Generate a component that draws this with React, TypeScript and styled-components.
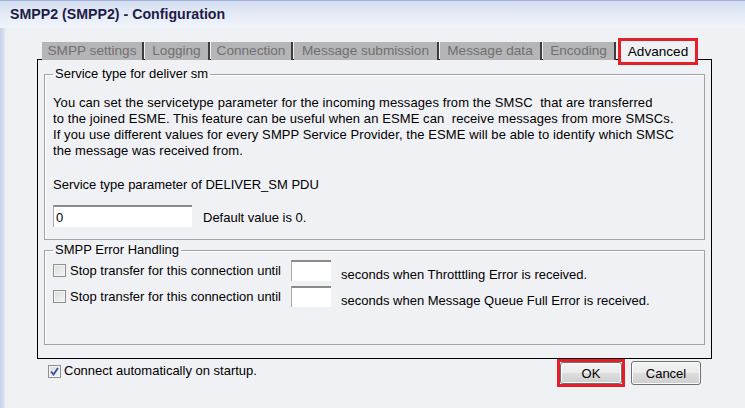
import * as React from "react";
import styled, { createGlobalStyle } from "styled-components";

const GlobalStyle = createGlobalStyle`
  html, body {
    margin: 0;
    padding: 0;
    background: #f0f1f5;
  }
  body {
    font-family: "Liberation Sans", Arial, sans-serif;
    font-size: 13px;
    color: #000;
  }
`;

const Window = styled.div`
  width: 745px;
  height: 408px;
  display: flex;
  flex-direction: column;
  background: linear-gradient(to right, #c3d1ea 0, #d9e2f2 4px, #e9eef8 5px);
  border-top: 1px solid #9fb2dc;
  box-sizing: border-box;
  overflow: hidden;
`;

const TitleBar = styled.div`
  height: 27px;
  display: flex;
  align-items: center;
  padding: 0 0 2px 10px;
  box-sizing: border-box;
  background: linear-gradient(to bottom, #d3ddf0 0, #e4eaf6 45%, #f1f4fa 100%);
  color: #1d1d48;
  font-weight: bold;
  font-size: 14.2px;
`;

const Body = styled.div`
  flex: 1;
  margin-left: 6px;
  background: #f0f1f5;
  display: flex;
  flex-direction: column;
  padding: 14px 0 0 31px;
`;

const Sheet = styled.div`
  width: 675px;
  display: flex;
  flex-direction: column;
`;

const TabStrip = styled.div`
  display: flex;
  align-items: flex-start;
  height: 18px;
  padding-left: 5px;
  margin-bottom: -1px;
  position: relative;
  z-index: 2;
  font-size: 13.6px;
`;

const Tab = styled.div<{ $width: number }>`
  width: ${(p) => p.$width}px;
  height: 18px;
  margin-right: 1px;
  padding-bottom: 1px;
  display: flex;
  align-items: center;
  justify-content: center;
  box-sizing: border-box;
  white-space: nowrap;
  background: #b5b5b7;
  color: #707072;
  border-right: 2px solid #3c3c3c;
`;

const ActiveTab = styled.div<{ $width: number }>`
  width: ${(p) => p.$width}px;
  height: 27px;
  margin-top: -4px;
  margin-left: 1px;
  padding-bottom: 1px;
  display: flex;
  align-items: center;
  justify-content: center;
  box-sizing: border-box;
  white-space: nowrap;
  background: #f0f1f5;
  color: #000;
  border: 3px solid #e3202a;
`;

const Panel = styled.div`
  border: 1px solid #000;
  padding: 6px 6px 13px 6px;
  display: flex;
  flex-direction: column;
  gap: 2px;
  position: relative;
  z-index: 1;
`;

const Group = styled.fieldset<{ $bottom: number }>`
  margin: 0;
  padding: 0 8px ${(p) => p.$bottom}px 8px;
  border: 1px solid #a2a2a6;
  box-shadow: inset 1px 1px 0 #ffffff;
  min-width: 0;
`;

const Legend = styled.legend`
  padding: 0 2px;
  line-height: 16px;
  height: 16px;
`;

const Paragraph = styled.div`
  margin-top: 13px;
  line-height: 16px;
  white-space: pre;
  letter-spacing: 0.09px;
`;

const Caption = styled.div`
  margin-top: 18px;
  line-height: 16px;
`;

const InputRow = styled.div`
  margin-top: 12px;
  display: flex;
  align-items: center;
  gap: 11px;
`;

const TextBox = styled.div<{ $width: number; $height: number }>`
  width: ${(p) => p.$width}px;
  height: ${(p) => p.$height}px;
  box-sizing: border-box;
  background: #fff;
  border-top: 2px solid #8a8a8a;
  border-left: 1px solid #a8a8a8;
  padding: 1px 3px 0 2px;
  display: flex;
  align-items: center;
  line-height: 16px;
`;

const HelpText = styled.span`
  padding-top: 3px;
`;

const ErrorRow = styled.div<{ $top: number }>`
  margin-top: ${(p) => p.$top}px;
  height: 21px;
  display: flex;
  align-items: center;
`;

const CheckLabel = styled.label`
  display: flex;
  align-items: center;
  gap: 4px;
  width: 238px;
  white-space: nowrap;
`;

const SecondsLabel = styled.span`
  margin-left: 10px;
  padding-top: 7px;
  white-space: nowrap;
`;

const Box = styled.span`
  width: 13px;
  height: 13px;
  box-sizing: border-box;
  border: 1px solid #8e8f8f;
  background: linear-gradient(135deg, #dcdcdc 0, #f4f4f4 100%);
  box-shadow: inset 0 0 0 1px #f4f4f4;
  display: inline-flex;
  align-items: center;
  justify-content: center;
  flex: none;
`;

const Footer = styled.div`
  display: flex;
  justify-content: space-between;
  align-items: flex-start;
  padding: 0 11px 0 11px;
`;

const AutoConnect = styled.label`
  display: flex;
  align-items: center;
  gap: 3px;
  margin-top: 5px;
  line-height: 14px;
`;

const Buttons = styled.div`
  display: flex;
  align-items: flex-start;
  gap: 6px;
`;

const Highlight = styled.div`
  border: 3px solid #e3202a;
  display: flex;
  margin-left: 1px;
`;

const Button = styled.button<{ $width: number }>`
  width: ${(p) => p.$width}px;
  height: 22px;
  margin: 0;
  padding: 0;
  font: inherit;
  color: #000;
  border: 1px solid #707070;
  border-radius: 3px;
  background: linear-gradient(to bottom, #f2f2f2 0, #ebebeb 50%, #dddddd 51%, #cfcfcf 100%);
  box-shadow: inset 0 0 0 1px #fbfbfb;
`;

const CancelButton = styled(Button)`
  height: 24px;
  margin-top: 2px;
`;

function CheckBox({ checked }: { checked?: boolean }) {
  return (
    <Box>
      {checked && (
        <svg width="9" height="9" viewBox="0 0 9 9">
          <path d="M1 4.5 L3.5 7.5 L8 1" fill="none" stroke="#3b4f9e" strokeWidth="1.8" />
        </svg>
      )}
    </Box>
  );
}

const tabs: [string, number][] = [
  ["SMPP settings", 102],
  ["Logging", 65],
  ["Connection", 82],
  ["Message submission", 145],
  ["Message data", 102],
  ["Encoding", 73],
];

const intro = [
  "You can set the servicetype parameter for the incoming messages from the SMSC  that are transferred",
  "to the joined ESME. This feature can be useful when an ESME can  receive messages from more SMSCs.",
  "If you use different values for every SMPP Service Provider, the ESME will be able to identify which SMSC",
  "the message was received from.",
];

function App() {
  return (
    <>
      <GlobalStyle />
      <Window>
        <TitleBar>SMPP2 (SMPP2) - Configuration</TitleBar>
        <Body>
          <Sheet>
            <TabStrip>
              {tabs.map(([t, w]) => (
                <Tab key={t} $width={w}>
                  {t}
                </Tab>
              ))}
              <ActiveTab $width={80}>Advanced</ActiveTab>
            </TabStrip>
            <Panel>
              <Group $bottom={12}>
                <Legend>Service type for deliver sm</Legend>
                <Paragraph>{intro.join("\n")}</Paragraph>
                <Caption>Service type parameter of DELIVER_SM PDU</Caption>
                <InputRow>
                  <TextBox $width={139} $height={22}>0</TextBox>
                  <HelpText>Default value is 0.</HelpText>
                </InputRow>
              </Group>
              <Group $bottom={37}>
                <Legend>SMPP Error Handling</Legend>
                <ErrorRow $top={2}>
                  <CheckLabel>
                    <CheckBox />
                    Stop transfer for this connection until
                  </CheckLabel>
                  <TextBox $width={40} $height={21} />
                  <SecondsLabel>seconds when Throtttling Error is received.</SecondsLabel>
                </ErrorRow>
                <ErrorRow $top={5}>
                  <CheckLabel>
                    <CheckBox />
                    Stop transfer for this connection until
                  </CheckLabel>
                  <TextBox $width={40} $height={21} />
                  <SecondsLabel>seconds when Message Queue Full Error is received.</SecondsLabel>
                </ErrorRow>
              </Group>
            </Panel>
            <Footer>
              <AutoConnect>
                <CheckBox checked />
                Connect automatically on startup.
              </AutoConnect>
              <Buttons>
                <Highlight>
                  <Button $width={62}>OK</Button>
                </Highlight>
                <CancelButton $width={70}>Cancel</CancelButton>
              </Buttons>
            </Footer>
          </Sheet>
        </Body>
      </Window>
    </>
  );
}

export default App;
